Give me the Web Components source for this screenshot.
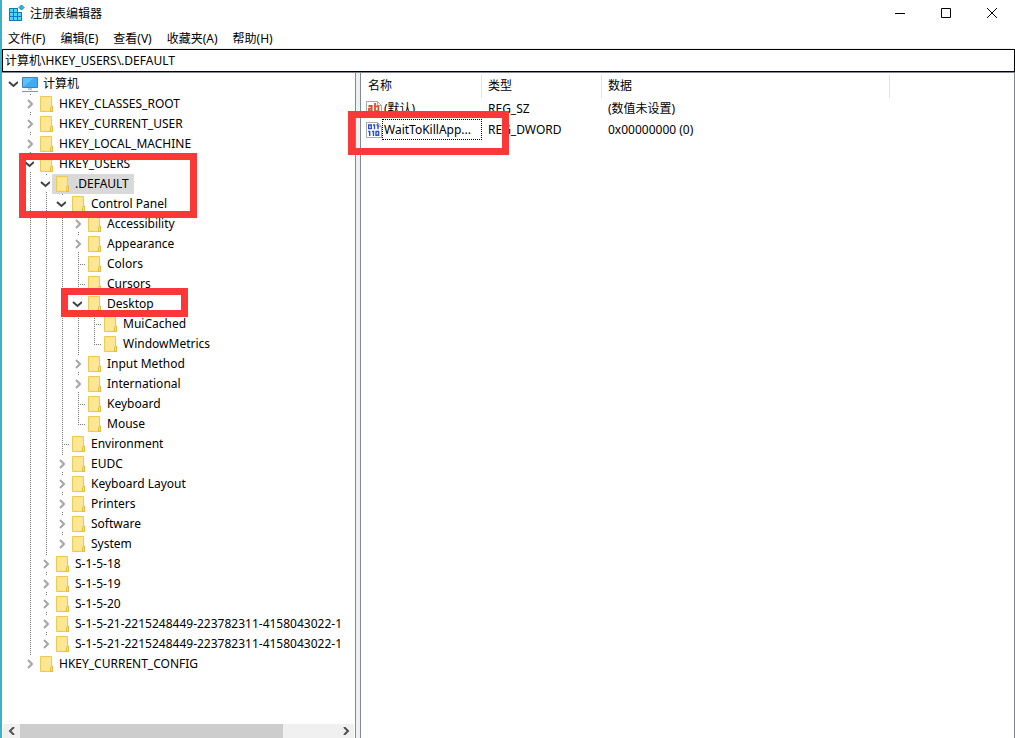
<!DOCTYPE html>
<html lang="zh-CN">
<head>
<meta charset="utf-8">
<title>注册表编辑器</title>
<style>
html, body { height: 100%; margin: 0; }
body { font: 12px/18px "Noto Sans", "Noto Sans CJK SC", sans-serif; color: #000; background: #fff; overflow: hidden; }
</style>
</head>
<body>
<reg-window>
  <title-bar slot="title">注册表编辑器</title-bar>
  <menu-bar slot="menu" items="文件(F),编辑(E),查看(V),收藏夹(A),帮助(H)"></menu-bar>
  <address-bar slot="address" path="计算机\HKEY_USERS\.DEFAULT"></address-bar>
  <tree-pane slot="tree">
    <reg-key label="计算机" kind="computer" state="open">
      <reg-key label="HKEY_CLASSES_ROOT" state="closed"></reg-key>
      <reg-key label="HKEY_CURRENT_USER" state="closed"></reg-key>
      <reg-key label="HKEY_LOCAL_MACHINE" state="closed"></reg-key>
      <reg-key label="HKEY_USERS" state="open">
        <reg-key label=".DEFAULT" state="open" selected>
          <reg-key label="Control Panel" state="open">
            <reg-key label="Accessibility" state="closed"></reg-key>
            <reg-key label="Appearance" state="closed"></reg-key>
            <reg-key label="Colors"></reg-key>
            <reg-key label="Cursors"></reg-key>
            <reg-key label="Desktop" state="open">
              <reg-key label="MuiCached"></reg-key>
              <reg-key label="WindowMetrics"></reg-key>
            </reg-key>
            <reg-key label="Input Method" state="closed"></reg-key>
            <reg-key label="International" state="closed"></reg-key>
            <reg-key label="Keyboard"></reg-key>
            <reg-key label="Mouse"></reg-key>
          </reg-key>
          <reg-key label="Environment"></reg-key>
          <reg-key label="EUDC" state="closed"></reg-key>
          <reg-key label="Keyboard Layout" state="closed"></reg-key>
          <reg-key label="Printers" state="closed"></reg-key>
          <reg-key label="Software" state="closed"></reg-key>
          <reg-key label="System" state="closed"></reg-key>
        </reg-key>
        <reg-key label="S-1-5-18" state="closed"></reg-key>
        <reg-key label="S-1-5-19" state="closed"></reg-key>
        <reg-key label="S-1-5-20" state="closed"></reg-key>
        <reg-key label="S-1-5-21-2215248449-223782311-4158043022-1" state="closed"></reg-key>
        <reg-key label="S-1-5-21-2215248449-223782311-4158043022-1" state="closed"></reg-key>
      </reg-key>
      <reg-key label="HKEY_CURRENT_CONFIG" state="closed"></reg-key>
    </reg-key>
  </tree-pane>
  <value-list slot="values"></value-list>
  <mark-box slot="marks" style="--x:17px;--y:153px;--w:178px;--h:65px"></mark-box>
  <mark-box slot="marks" style="--x:59px;--y:288px;--w:127px;--h:29px"></mark-box>
  <mark-box slot="marks" style="--x:346px;--y:111px;--w:161px;--h:44px"></mark-box>
</reg-window>
<script>
const define = (name, html, setup) => customElements.define(name, class extends HTMLElement {
  constructor() {
    super();
    this.attachShadow({ mode: "open" }).innerHTML = html;
  }
  connectedCallback() {
    if (setup && !this.ready) { this.ready = true; setup(this, this.shadowRoot); }
  }
});

const BUTTON = "button{font:inherit;color:inherit;background:none;border:0;padding:0;margin:0;display:block}";

define("reg-window", `<style>
:host{display:grid;grid-template-rows:26px 23px 24px minmax(0,1fr);position:relative;height:100%;box-sizing:border-box;border-left:2px solid #3eb1c8;overflow:hidden}
.panes{display:grid;grid-template-columns:354px 4px minmax(0,1fr);min-height:0}
.split{background:#f0f0f0}
</style>
<slot name="title"></slot><slot name="menu"></slot><slot name="address"></slot>
<main class="panes"><slot name="tree"></slot><div class="split"></div><slot name="values"></slot></main>
<slot name="marks"></slot>`);

define("title-bar", `<style>${BUTTON}
:host{display:flex;align-items:center;min-width:0}
.logo{width:18px;height:18px;margin:0 4px 0 6px;flex:none}
.name{flex:1;padding-top:2px}
button{width:46px;height:26px;display:grid;place-items:center}
</style>
<svg class="logo" viewBox="0 0 18 18"><path fill="#0d7fb8" d="M1 4h9v4h4v9H1z"/><path fill="#4fd2fb" d="M2 5h3v3H2zM6 5h3v3H6zM2 9h3v3H2zM6 9h3v3H6zM10 9h3v3h-3zM2 13h3v3H2zM6 13h3v3H6zM10 13h3v3h-3z"/><path fill="#37b5e8" stroke="#0d7fb8" d="M13.500 1l2.500 2.500-2.500 2.500L11 3.500z"/></svg>
<span class="name"><slot></slot></span>
<button aria-label="最小化"><svg width="10" height="10"><path d="M0 5.500h10" stroke="#000"/></svg></button>
<button aria-label="最大化"><svg width="10" height="10"><path d="M.5.5h9v9h-9z" fill="none" stroke="#000"/></svg></button>
<button aria-label="关闭"><svg width="10" height="10"><path d="M0 0l10 10M10 0L0 10" stroke="#000"/></svg></button>`);

define("menu-bar", `<style>${BUTTON}
:host{display:flex;align-items:end;gap:15px;padding-left:6px;border-bottom:1px solid #f0f0f0;box-sizing:border-box}
button{white-space:nowrap}
</style>`, (el, root) => {
  for (const text of el.getAttribute("items").split(",")) {
    const b = document.createElement("button");
    b.textContent = text;
    root.append(b);
  }
});

define("address-bar", `<style>
:host{display:block;border-bottom:1px solid #828790;box-sizing:border-box}
input{display:block;width:100%;height:23px;box-sizing:border-box;border:1px solid #000;padding:0 2px 2px;font:inherit;color:#000;background:#fff;outline:0}
</style><input aria-label="地址">`, (el, root) => { root.querySelector("input").value = el.getAttribute("path"); });

define("tree-pane", `<style>${BUTTON}
:host{display:grid;grid-template-rows:minmax(0,1fr) 14px;border-right:1px solid #828790;min-width:0;overflow:hidden}
.tree{overflow:hidden;padding:1px 0 0 4px}
.bar{display:grid;grid-template-columns:17px minmax(0,1fr) 17px;background:#f0f0f0;margin:0 1px}
.bar button{height:14px;display:grid;place-items:center}
.thumb{background:#cdcdcd;width:83%}
path{fill:none;stroke:#505050;stroke-width:2}
</style>
<div class="tree" role="tree"><slot></slot></div>
<div class="bar"><button aria-label="向左滚动"><svg width="8" height="8"><path d="M6 0L2 4l4 4"/></svg></button><div class="thumb"></div><button aria-label="向右滚动"><svg width="8" height="8"><path d="M2 0l4 4-4 4"/></svg></button></div>`);

const FOLDER = `<svg width="18" height="20"><path d="M2.500 2.500h11v9l1 1v5h-12z" fill="#ffe694" stroke="#efc94c"/><path d="M12.500 17.500v-4l1-1.500h1v5.500z" fill="#ffe694" stroke="#e5b93b"/></svg>`;
const COMPUTER = `<svg width="18" height="20"><path d="M.5 3.500h15v10H.5z" fill="#5cc0fa" stroke="#3a87b5"/><path d="M1 13L12 4h3v9z" fill="#2b9cf0" opacity=".6"/><path d="M6 14h4v2H6z" fill="#b8c8d0"/><path d="M0 17.500h16" stroke="#8898a4"/></svg>`;

define("reg-key", `<style>${BUTTON}
:host{display:block;background:repeating-linear-gradient(#777 0 1px,#fff 1px 2px) 8px 0/1px 100% no-repeat}
:host(:last-child){background-size:1px 10px}
:host([kind=computer]){background:none}
.row{display:flex;height:20px;white-space:nowrap}
.tip{width:14px;flex:none;display:flex;align-items:center}
button{width:14px;height:16px;background:#fff;display:grid;place-items:center}
.leaf{width:8px;height:1px;margin-left:8px;flex:none;background:repeating-linear-gradient(90deg,#777 0 1px,#fff 1px 2px)}
.item{display:flex;padding:0 5px 0 2px}
.icon{display:flex;flex:none}
.text{padding-left:3px;line-height:20px}
:host([selected]) .item{background:#d9d9d9}
.kids{padding-left:16px}
</style>
<div class="row"><span class="tip"></span><span class="item" role="treeitem"><span class="icon"></span><span class="text"></span></span></div>
<div class="kids" role="group"><slot></slot></div>`, (el, root) => {
  const state = el.getAttribute("state");
  root.querySelector(".text").textContent = el.getAttribute("label");
  root.querySelector(".icon").innerHTML = el.getAttribute("kind") === "computer" ? COMPUTER : FOLDER;
  root.querySelector(".tip").innerHTML = !state ? `<i class="leaf"></i>`
    : state === "open" ? `<button aria-label="折叠"><svg width="10" height="8"><path d="M1 2l4.500 4L10 2" fill="none" stroke="#404040" stroke-width="2"/></svg></button>`
    : `<button aria-label="展开"><svg width="8" height="10"><path d="M3 1l4 4-4 4" fill="none" stroke="#a6a6a6" stroke-width="2"/></svg></button>`;
});

const PAGE = `<path d="M.5.5h11l4 4v11H.5z" fill="#fff" stroke="#a8a8a8"/><path d="M11.500.5v4h4" fill="none" stroke="#a8a8a8"/>`;
const AB = `<svg width="16" height="16">${PAGE}<g fill="none" stroke="#d9512c" stroke-width="1.800"><path d="M2.500 5h3.200v6M5.700 7.700H3v2.400h2.700M9 2v9M9 5.300h3.400v4.800H9"/></g></svg>`;
const BITS = `<svg width="16" height="16">${PAGE}<g fill="none" stroke="#2a4fd0" stroke-width="1.400"><path d="M2.700 3h2.600v3.600H2.700zM7 3h1.500v4.300M10.500 3H12v4.300M2.200 9.500h1.500V14M6 9.500h1.500V14M10 9.500h2.600v3.800H10z"/></g></svg>`;

define("value-list", `<style>
:host{display:block;border-left:1px solid #828790;border-right:1px solid #828790;min-width:0;overflow:hidden}
table{border-collapse:separate;border-spacing:0;table-layout:fixed;width:100%;margin-top:1px}
th,td{font-weight:400;text-align:left;padding:0 0 0 6px;white-space:nowrap;overflow:hidden}
th{height:24px;border-right:1px solid #e5e5e5;box-sizing:border-box}
th:first-child{padding-left:7px}
th:last-child{border:0}
td{height:21px}
td:first-child{padding-left:5px}
.name{display:flex;align-items:center}
.name svg{flex:none}
.label{flex:1;min-width:0;border:1px solid transparent;padding-left:1px;line-height:19px}
.focus{border:1px dotted #000}
</style>
<table>
<colgroup><col style="width:121px"><col style="width:120px"><col style="width:288px"><col></colgroup>
<thead><tr><th>名称</th><th>类型</th><th>数据</th><th></th></tr></thead>
<tbody>
<tr><td><div class="name">${AB}<span class="label">(默认)</span></div></td><td>REG_SZ</td><td>(数值未设置)</td><td></td></tr>
<tr><td><div class="name">${BITS}<span class="label focus">WaitToKillApp...</span></div></td><td>REG_DWORD</td><td>0x00000000 (0)</td><td></td></tr>
</tbody></table>`);

define("mark-box", `<style>
:host{display:block;position:absolute;left:var(--x);top:var(--y);width:var(--w);height:var(--h);box-sizing:border-box;border:7px solid #fb3838;pointer-events:none}
</style>`);
</script>
</body>
</html>
